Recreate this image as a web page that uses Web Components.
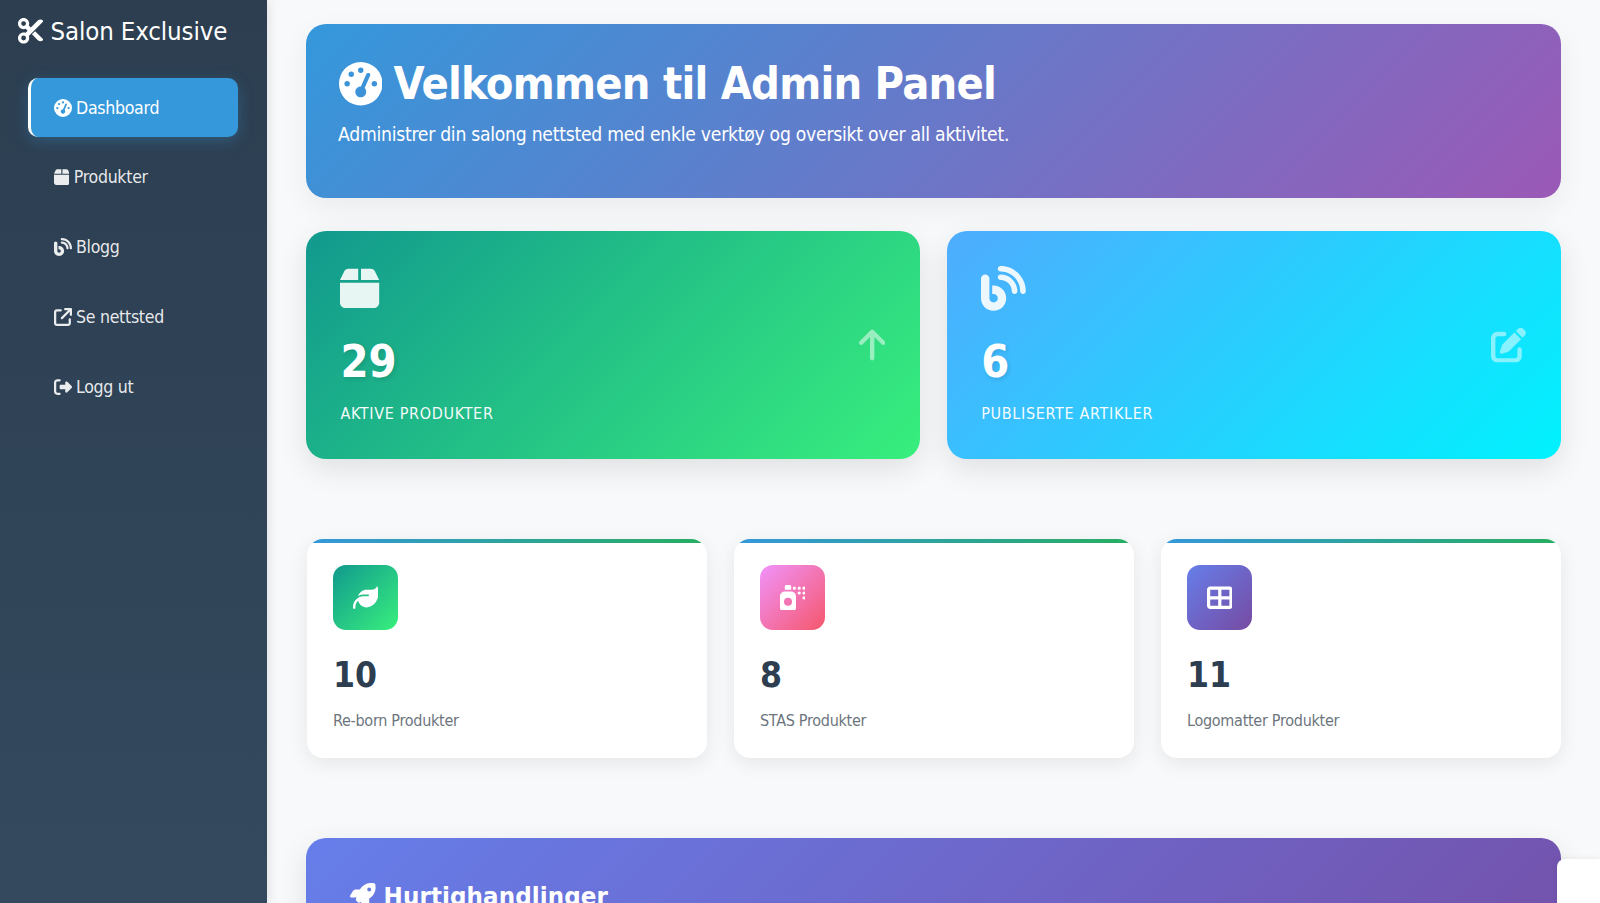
<!DOCTYPE html>
<html lang="no">
<head>
<meta charset="utf-8">
<title>Admin Panel</title>
<style>
  html, body { margin: 0; height: 100%; overflow: hidden; }
  body { font-family: "DejaVu Sans Condensed", "DejaVu Sans", sans-serif; background: #f8f9fa; }
</style>
</head>
<body>
<admin-shell>
  <side-bar slot="side" brand="Salon Exclusive">
    <nav-link icon="gauge" active>Dashboard</nav-link>
    <nav-link icon="box">Produkter</nav-link>
    <nav-link icon="blog">Blogg</nav-link>
    <nav-link icon="external">Se nettsted</nav-link>
    <nav-link icon="logout">Logg ut</nav-link>
  </side-bar>

  <hero-banner heading="Velkommen til Admin Panel">Administrer din salong nettsted med enkle verktøy og oversikt over all aktivitet.</hero-banner>

  <card-row class="stats">
    <stat-card icon="box" side-icon="up" value="29" from="#11998e" to="#38ef7d">Aktive produkter</stat-card>
    <stat-card icon="blog" side-icon="pen" value="6" from="#4facfe" to="#00f2fe">Publiserte artikler</stat-card>
  </card-row>

  <card-row class="minis">
    <mini-card icon="leaf" value="10" from="#11998e" to="#38ef7d">Re-born Produkter</mini-card>
    <mini-card icon="spray" value="8" from="#f093fb" to="#f5576c">STAS Produkter</mini-card>
    <mini-card icon="grid" value="11" from="#667eea" to="#764ba2">Logomatter Produkter</mini-card>
  </card-row>

  <quick-actions heading="Hurtighandlinger"></quick-actions>
</admin-shell>
<corner-panel></corner-panel>

<script>
'use strict';

// font awesome 6 solid shapes, [viewBox width, path]
const ICONS = {
  scissors: [512, 'M256 192l-39.5-39.5c4.9-12.6 7.5-26.2 7.5-40.5C224 50.1 173.9 0 112 0S0 50.1 0 112s50.1 112 112 112c14.3 0 27.9-2.7 40.5-7.5L192 256l-39.5 39.5c-12.6-4.9-26.2-7.5-40.5-7.5C50.1 288 0 338.1 0 400s50.1 112 112 112s112-50.1 112-112c0-14.3-2.7-27.9-7.5-40.5L499.2 76.8c7.1-7.1 7.1-18.5 0-25.6c-28.3-28.3-74.1-28.3-102.4 0L256 192zm22.6 135.4L396.8 445.6c28.3 28.3 74.1 28.3 102.4 0c7.1-7.1 7.1-18.5 0-25.6L342.6 263.4l-64 64zM64 112a48 48 0 1 1 96 0 48 48 0 1 1 -96 0zm48 240a48 48 0 1 1 0 96 48 48 0 1 1 0-96z'],
  gauge: [512, 'M0 256a256 256 0 1 1 512 0A256 256 0 1 1 0 256zM288 96a32 32 0 1 0 -64 0 32 32 0 1 0 64 0zM256 416c35.3 0 64-28.7 64-64c0-17.4-6.9-33.1-18.1-44.6L366 161.7c5.3-12.1-.2-26.3-12.3-31.6s-26.3 .2-31.6 12.3L257.9 288c-.6 0-1.3 0-1.9 0c-35.3 0-64 28.7-64 64s28.7 64 64 64zM176 144a32 32 0 1 0 -64 0 32 32 0 1 0 64 0zM96 288a32 32 0 1 0 0-64 32 32 0 1 0 0 64zm352-32a32 32 0 1 0 -64 0 32 32 0 1 0 64 0z'],
  box: [448, 'M50.7 58.5L0 160H208V32H93.7C75.5 32 58.9 42.3 50.7 58.5zM240 160H448L397.3 58.5C389.1 42.3 372.5 32 354.3 32H240V160zm208 32H0V416c0 35.3 28.7 64 64 64H384c35.3 0 64-28.7 64-64V192z'],
  blog: [512, 'M192 32c0 17.7 14.3 32 32 32c123.7 0 224 100.3 224 224c0 17.7 14.3 32 32 32s32-14.3 32-32C512 128.9 383.1 0 224 0c-17.7 0-32 14.3-32 32zm0 96c0 17.7 14.3 32 32 32c70.7 0 128 57.3 128 128c0 17.7 14.3 32 32 32s32-14.3 32-32c0-106-86-192-192-192c-17.7 0-32 14.3-32 32zM96 144c0-26.5-21.5-48-48-48S0 117.5 0 144V368c0 79.5 64.5 144 144 144s144-64.5 144-144s-64.5-144-144-144H128v96h16c26.5 0 48 21.5 48 48s-21.5 48-48 48s-48-21.5-48-48V144z'],
  external: [512, 'M320 0c-17.7 0-32 14.3-32 32s14.3 32 32 32h82.7L201.4 265.4c-12.5 12.5-12.5 32.8 0 45.3s32.8 12.5 45.3 0L448 109.3V192c0 17.7 14.3 32 32 32s32-14.3 32-32V32c0-17.7-14.3-32-32-32H320zM80 32C35.8 32 0 67.8 0 112V432c0 44.2 35.8 80 80 80H400c44.2 0 80-35.8 80-80V320c0-17.7-14.3-32-32-32s-32 14.3-32 32V432c0 8.8-7.2 16-16 16H80c-8.8 0-16-7.2-16-16V112c0-8.8 7.2-16 16-16H192c17.7 0 32-14.3 32-32s-14.3-32-32-32H80z'],
  logout: [512, 'M377.9 105.9L500.7 228.7c7.2 7.2 11.3 17.1 11.3 27.3s-4.1 20.1-11.3 27.3L377.9 406.1c-6.4 6.4-15 9.9-24 9.9c-18.7 0-33.9-15.2-33.9-33.9l0-62.1-128 0c-17.7 0-32-14.3-32-32l0-64c0-17.7 14.3-32 32-32l128 0 0-62.1c0-18.7 15.2-33.9 33.9-33.9c9 0 17.6 3.6 24 9.9zM160 96L96 96c-17.7 0-32 14.3-32 32l0 256c0 17.7 14.3 32 32 32l64 0c17.7 0 32 14.3 32 32s-14.3 32-32 32l-64 0c-53 0-96-43-96-96L0 128C0 75 43 32 96 32l64 0c17.7 0 32 14.3 32 32s-14.3 32-32 32z'],
  up: [384, 'M214.6 41.4c-12.5-12.5-32.8-12.5-45.3 0l-160 160c-12.5 12.5-12.5 32.8 0 45.3s32.8 12.5 45.3 0L160 141.2V448c0 17.7 14.3 32 32 32s32-14.3 32-32V141.2L329.4 246.6c12.5 12.5 32.8 12.5 45.3 0s12.5-32.8 0-45.3l-160-160z'],
  pen: [512, 'M471.6 21.7c-21.9-21.9-57.3-21.9-79.2 0L362.3 51.7l97.9 97.9 30.1-30.1c21.9-21.9 21.9-57.3 0-79.2L471.6 21.7zm-299.2 220c-6.1 6.1-10.8 13.6-13.5 21.9l-29.6 88.8c-2.9 8.6-.6 18.1 5.8 24.6s15.9 8.7 24.6 5.8l88.8-29.6c8.2-2.7 15.7-7.4 21.9-13.5L437.7 172.3 339.7 74.3 172.4 241.7zM96 64C43 64 0 107 0 160V416c0 53 43 96 96 96H352c53 0 96-43 96-96V320c0-17.7-14.3-32-32-32s-32 14.3-32 32v96c0 17.7-14.3 32-32 32H96c-17.7 0-32-14.3-32-32V160c0-17.7 14.3-32 32-32h96c17.7 0 32-14.3 32-32s-14.3-32-32-32H96z'],
  leaf: [512, 'M272 96c-78.6 0-145.1 51.5-167.7 122.5c33.6-17 71.5-26.5 111.7-26.5h88c8.8 0 16 7.2 16 16s-7.2 16-16 16H288 216s0 0 0 0c-16.6 0-32.7 1.9-48.2 5.4c-25.9 5.9-50 16.4-71.4 30.7c0 0 0 0 0 0C38.3 298.8 0 364.9 0 440v16c0 13.3 10.7 24 24 24s24-10.7 24-24V440c0-48.7 20.7-92.5 53.8-123.2C121.6 392.3 190.3 448 272 448l1 0c132.1-.7 239-130.9 239-291.4c0-42.6-7.5-83.1-21.1-119.6c-2.6-6.9-12.7-6.6-16.2 0C455.3 75.6 415.9 96 372 96H272z'],
  spray: [512, 'M128 0h64c17.7 0 32 14.3 32 32v64H96V32c0-17.7 14.3-32 32-32zM0 224c0-53 43-96 96-96H224c53 0 96 43 96 96V464c0 26.5-21.5 48-48 48H48c-26.5 0-48-21.5-48-48V224zm240 112a80 80 0 1 0 -160 0 80 80 0 1 0 160 0zM256 64a32 32 0 1 1 64 0 32 32 0 1 1 -64 0zM480 32a32 32 0 1 1 0 64 32 32 0 1 1 0-64zM352 64a32 32 0 1 1 64 0 32 32 0 1 1 -64 0zM480 128a32 32 0 1 1 0 64 32 32 0 1 1 0-64zM352 160a32 32 0 1 1 64 0 32 32 0 1 1 -64 0zM480 224a32 32 0 1 1 0 64 32 32 0 1 1 0-64z'],
  grid: [512, 'M448 96V224H288V96H448zm0 192V416H288V288H448zM224 224H64V96H224V224zM64 288H224V416H64V288zM64 32C28.7 32 0 60.7 0 96V416c0 35.3 28.7 64 64 64H448c35.3 0 64-28.7 64-64V96c0-35.3-28.7-64-64-64H64z'],
  rocket: [512, 'M156.6 384.9L125.7 354c-8.5-8.5-11.5-20.8-7.7-32.2c3-8.9 7-20.5 11.8-33.8L24 288c-8.6 0-16.6-4.6-20.9-12.1s-4.2-16.7 .2-24.1l52.5-88.5c13-21.9 36.5-35.3 61.9-35.3l82.3 0c2.4-4 4.8-7.7 7.2-11.3C289.1-4.1 411.1-8.1 483.9 5.3c11.6 2.1 20.6 11.2 22.8 22.8c13.4 72.9 9.3 194.8-111.4 276.7c-3.5 2.4-7.3 4.8-11.3 7.2v82.3c0 25.4-13.4 49-35.3 61.9l-88.5 52.5c-7.4 4.4-16.6 4.5-24.1 .2s-12.1-12.2-12.1-20.9V380.8c-14.1 4.9-26.4 8.9-35.7 11.9c-11.2 3.6-23.4 .5-31.8-7.8zM384 168a40 40 0 1 0 0-80 40 40 0 1 0 0 80z'],
};

// svg sized like an icon font glyph: 1em tall, width from the viewBox
function glyph(name, extra = '') {
  const [w, d] = ICONS[name];
  return `<svg ${extra} viewBox="0 0 ${w} 512" style="height:1em;width:${w / 512}em;flex:none;display:block" fill="currentColor" aria-hidden="true"><path d="${d}"/></svg>`;
}

customElements.define('admin-shell', class extends HTMLElement {
  constructor() {
    super();
    this.attachShadow({mode: 'open'}).innerHTML = `
      <style>
        :host { display: flex; height: 903px; overflow: hidden; }
        main {
          flex: 1;
          min-width: 0;
          padding: 24px 39px 0;
          display: flex;
          flex-direction: column;
        }
      </style>
      <slot name="side"></slot>
      <main><slot></slot></main>
    `;
  }
});

customElements.define('side-bar', class extends HTMLElement {
  constructor() {
    super();
    this.attachShadow({mode: 'open'}).innerHTML = `
      <style>
        :host {
          display: block;
          flex: none;
          width: 267px;
          box-sizing: border-box;
          background: linear-gradient(180deg, #2c3e50, #34495e);
          box-shadow: 2px 0 10px rgba(0, 0, 0, .1);
          color: #fff;
          position: relative;
        }
        h2 {
          margin: 0;
          display: flex;
          align-items: flex-start;
          gap: 7.5px;
          padding: 17px 0 0 17.5px;
          height: 61px;
          box-sizing: border-box;
          font-size: 25.6px;
          line-height: 29px;
          font-weight: 400;
          letter-spacing: -.14px;
          white-space: nowrap;
        }
        h2 svg { margin-top: 1px; }
        nav { display: flex; flex-direction: column; gap: 10.8px; padding: 17px 28.7px 0 28px; }
      </style>
      <h2><span class="mark"></span><span class="name"></span></h2>
      <nav><slot></slot></nav>
    `;
  }

  connectedCallback() {
    this.shadowRoot.querySelector('.mark').innerHTML = glyph('scissors');
    this.shadowRoot.querySelector('.name').textContent = this.getAttribute('brand');
  }
});

customElements.define('nav-link', class extends HTMLElement {
  constructor() {
    super();
    this.attachShadow({mode: 'open'}).innerHTML = `
      <style>
        :host {
          display: flex;
          align-items: center;
          height: 59px;
          box-sizing: border-box;
          padding-left: 25.5px;
          border-radius: 10px;
          color: rgba(255, 255, 255, .9);
          font-size: 17.6px;
          letter-spacing: -.3px;
          white-space: nowrap;
        }
        :host([active]) {
          background: #3498db;
          border-left: 3px solid #fff;
          padding-left: 22.5px;
          color: #fff;
          box-shadow: 0 4px 15px rgba(52, 152, 219, .3);
        }
        .i { font-size: 18px; margin-right: 4.5px; }
      </style>
      <span class="i"></span><slot></slot>
    `;
  }

  connectedCallback() {
    this.shadowRoot.querySelector('.i').innerHTML = glyph(this.getAttribute('icon'));
  }
});

customElements.define('hero-banner', class extends HTMLElement {
  constructor() {
    super();
    this.attachShadow({mode: 'open'}).innerHTML = `
      <style>
        :host {
          display: block;
          flex: none;
          height: 174px;
          box-sizing: border-box;
          padding: 33px 32px 0;
          border-radius: 20px;
          color: #fff;
          background: linear-gradient(135deg, #3498db, #9b59b6);
          box-shadow: 0 10px 30px rgba(0, 0, 0, .06);
        }
        h1 {
          margin: 0 0 10px;
          display: flex;
          align-items: center;
          gap: 11.5px;
          font-size: 44.8px;
          line-height: 54px;
          font-weight: 700;
          letter-spacing: -.78px;
          white-space: nowrap;
        }
        h1 svg { height: 43.5px !important; width: 43.5px !important; margin-left: .5px; }
        p { margin: 0; font-size: 19.2px; line-height: 27px; letter-spacing: -.27px; white-space: nowrap; }
      </style>
      <h1></h1>
      <p><slot></slot></p>
    `;
  }

  connectedCallback() {
    const h1 = this.shadowRoot.querySelector('h1');
    h1.innerHTML = glyph('gauge');
    h1.append(this.getAttribute('heading'));
  }
});

customElements.define('card-row', class extends HTMLElement {
  constructor() {
    super();
    this.attachShadow({mode: 'open'}).innerHTML = `
      <style>
        :host { display: grid; flex: none; }
        :host(.stats) { grid-template-columns: 1fr 1fr; gap: 26.5px; margin-top: 33px; }
        :host(.minis) { grid-template-columns: repeat(3, 1fr); gap: 27px; margin: 80px .5px 0; }
      </style>
      <slot></slot>
    `;
  }
});

customElements.define('stat-card', class extends HTMLElement {
  constructor() {
    super();
    this.attachShadow({mode: 'open'}).innerHTML = `
      <style>
        :host {
          display: block;
          height: 228px;
          box-sizing: border-box;
          padding: 35px 34px 0 34.4px;
          border-radius: 20px;
          color: #fff;
          position: relative;
          background: linear-gradient(135deg, var(--from), var(--to));
          box-shadow: 0 10px 30px rgba(0, 0, 0, .1);
        }
        .icon { font-size: 44.8px; height: 45px; opacity: .9; }
        .value {
          margin-top: 24px;
          font-size: 44.8px;
          line-height: 54px;
          font-weight: 700;
          text-shadow: 2px 2px 4px rgba(0, 0, 0, .1);
        }
        .label {
          margin-top: 14px;
          font-size: 16px;
          line-height: 22px;
          letter-spacing: .68px;
          text-transform: uppercase;
          opacity: .95;
        }
        .side {
          position: absolute;
          right: 35px;
          top: 50%;
          transform: translateY(-50%);
          font-size: 35.2px;
          opacity: .5;
        }
      </style>
      <div class="icon"></div>
      <div class="value"></div>
      <div class="label"><slot></slot></div>
      <div class="side"></div>
    `;
  }

  connectedCallback() {
    this.style.setProperty('--from', this.getAttribute('from'));
    this.style.setProperty('--to', this.getAttribute('to'));
    this.shadowRoot.querySelector('.icon').innerHTML = glyph(this.getAttribute('icon'));
    this.shadowRoot.querySelector('.value').textContent = this.getAttribute('value');
    this.shadowRoot.querySelector('.side').innerHTML = glyph(this.getAttribute('side-icon'));
  }
});

customElements.define('mini-card', class extends HTMLElement {
  constructor() {
    super();
    this.attachShadow({mode: 'open'}).innerHTML = `
      <style>
        :host {
          display: block;
          height: 219px;
          box-sizing: border-box;
          padding: 26px 26.5px 0;
          border-radius: 16px;
          background: #fff;
          overflow: hidden;
          position: relative;
          box-shadow: 0 5px 20px rgba(0, 0, 0, .08);
        }
        .bar {
          position: absolute;
          left: 0;
          right: 0;
          top: 0;
          height: 4px;
          background: linear-gradient(90deg, #3498db, #27ae60);
        }
        .icon {
          width: 65px;
          height: 65px;
          border-radius: 13px;
          color: #fff;
          font-size: 25.6px;
          display: flex;
          align-items: center;
          justify-content: center;
          background: linear-gradient(135deg, var(--from), var(--to));
        }
        .value {
          margin-top: 23px;
          font-size: 35.2px;
          line-height: 43px;
          font-weight: 700;
          color: #2c3e50;
        }
        .label { margin-top: 14px; font-size: 16px; line-height: 22px; letter-spacing: -.28px; color: #6c757d; }
      </style>
      <div class="bar"></div>
      <div class="icon"></div>
      <div class="value"></div>
      <div class="label"><slot></slot></div>
    `;
  }

  connectedCallback() {
    this.style.setProperty('--from', this.getAttribute('from'));
    this.style.setProperty('--to', this.getAttribute('to'));
    this.shadowRoot.querySelector('.icon').innerHTML = glyph(this.getAttribute('icon'));
    this.shadowRoot.querySelector('.value').textContent = this.getAttribute('value');
  }
});

customElements.define('quick-actions', class extends HTMLElement {
  constructor() {
    super();
    this.attachShadow({mode: 'open'}).innerHTML = `
      <style>
        :host {
          display: block;
          flex: none;
          height: 320px;
          box-sizing: border-box;
          margin-top: 80px;
          padding: 42px 44px;
          border-radius: 20px;
          color: #fff;
          background: linear-gradient(135deg, #667eea, #764ba2);
          box-shadow: 0 10px 30px rgba(0, 0, 0, .1);
        }
        h3 {
          margin: 0;
          display: flex;
          align-items: center;
          gap: 8px;
          font-size: 25.6px;
          line-height: 32px;
          font-weight: 700;
          letter-spacing: .1px;
          white-space: nowrap;
        }
      </style>
      <h3></h3>
    `;
  }

  connectedCallback() {
    const h3 = this.shadowRoot.querySelector('h3');
    h3.innerHTML = glyph('rocket');
    h3.append(this.getAttribute('heading'));
  }
});

// white panel that floats over the bottom right corner
customElements.define('corner-panel', class extends HTMLElement {
  constructor() {
    super();
    this.attachShadow({mode: 'open'}).innerHTML = `
      <style>
        :host {
          position: fixed;
          left: 1557px;
          top: 859px;
          right: 0;
          bottom: 0;
          background: #fff;
          border-top-left-radius: 8px;
          box-shadow: 0 0 6px rgba(0, 0, 0, .08);
        }
      </style>
    `;
  }
});
</script>
</body>
</html>
